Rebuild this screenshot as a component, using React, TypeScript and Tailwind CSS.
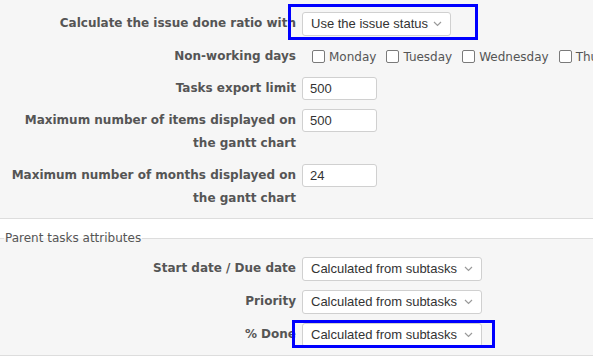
const labelClass =
  "w-[296px] shrink-0 text-right font-bold text-[12px] leading-[23px] text-[#555555]";
const fieldText = "font-['Liberation_Sans',Arial,sans-serif] text-[13px] text-[#333333]";

const days = ["Monday", "Tuesday", "Wednesday", "Thursday", "Friday"];

function Chevron() {
  return (
    <svg width="9" height="6" viewBox="0 0 9 6" className="shrink-0">
      <path d="M1 1l3.5 3.5L8 1" fill="none" stroke="#9a9a9a" strokeWidth="1.2" />
    </svg>
  );
}

function Select({ value, w }: { value: string; w: string }) {
  return (
    <div
      className={`${w} h-[24px] flex items-center justify-between pl-[8px] pr-[8px] bg-white border border-[#d0d0d0] rounded-[3px] ${fieldText}`}
    >
      <span className="whitespace-nowrap">{value}</span>
      <Chevron />
    </div>
  );
}

function TextInput({ value }: { value: string }) {
  return (
    <div
      className={`w-[75px] h-[23px] flex items-center pl-[7px] bg-white border border-[#d0d0d0] rounded-[3px] ${fieldText}`}
    >
      {value}
    </div>
  );
}

function Row({ label, children }: { label: React.ReactNode; children: React.ReactNode }) {
  return (
    <div className="flex items-start gap-[6px]">
      <div className={labelClass}>{label}</div>
      <div className="flex items-center min-h-[23px]">{children}</div>
    </div>
  );
}

export default function App() {
  return (
    <div className="relative w-full min-h-[356px] bg-white overflow-hidden font-['DejaVu_Sans',Verdana,sans-serif]">
      <div className="bg-[#f6f6f6] border-b border-[#dddddd] pt-[12px] pb-[8px] flex flex-col gap-[9px]">
        <Row label="Calculate the issue done ratio with">
          <Select value="Use the issue status" w="w-[149px]" />
        </Row>
        <Row label="Non-working days">
          <div className="flex items-center whitespace-nowrap pl-[10px] text-[12px] text-[#555555]">
            {days.map((d) => (
              <span key={d} className="flex items-center mr-[10px]">
                <span className="w-[13px] h-[13px] bg-white border border-[#7a7a7a] rounded-[2px] mr-[4px]" />
                {d}
              </span>
            ))}
          </div>
        </Row>
        <Row label="Tasks export limit">
          <TextInput value="500" />
        </Row>
        <Row
          label={
            <>
              Maximum number of items displayed on
              <br />
              the gantt chart
            </>
          }
        >
          <TextInput value="500" />
        </Row>
        <Row
          label={
            <>
              Maximum number of months displayed on
              <br />
              the gantt chart
            </>
          }
        >
          <TextInput value="24" />
        </Row>
      </div>

      <fieldset className="mt-[10px] bg-[#f6f6f6] border-0 border-t border-b border-[#dddddd] pb-[8px]">
        <legend className="ml-[4px] px-[1px] text-[12px] leading-[18px] text-[#555555]">
          Parent tasks attributes
        </legend>
        <div className="pt-[10px] flex flex-col gap-[9px]">
          <Row label="Start date / Due date">
            <Select value="Calculated from subtasks" w="w-[180px]" />
          </Row>
          <Row label="Priority">
            <Select value="Calculated from subtasks" w="w-[180px]" />
          </Row>
          <Row label="% Done">
            <Select value="Calculated from subtasks" w="w-[180px]" />
          </Row>
        </div>
      </fieldset>

      {/* annotation highlights */}
      <div className="absolute left-[288px] top-[4px] w-[190px] h-[36px] border-[3px] border-[#0000ff]" />
      <div className="absolute left-[292px] top-[320px] w-[203px] h-[28px] border-[3px] border-[#0000ff]" />
    </div>
  );
}
